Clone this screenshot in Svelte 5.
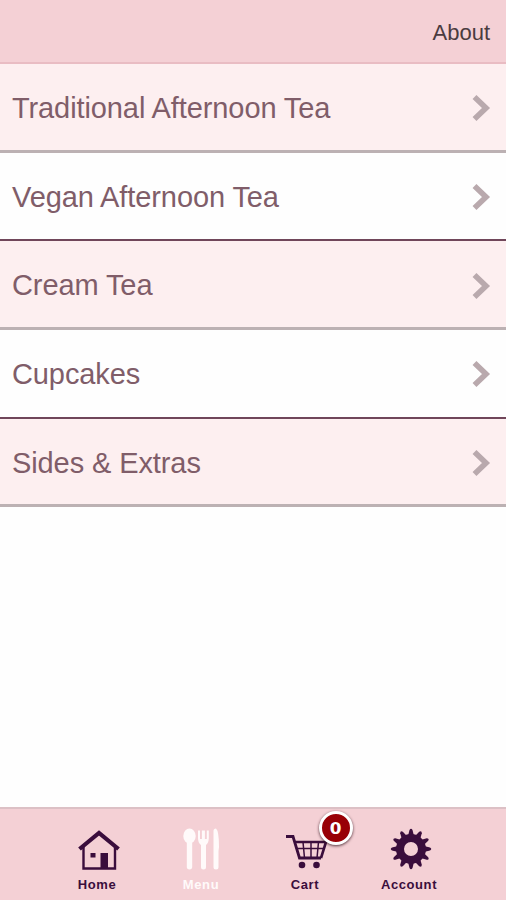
<script>
  const items = [
    'Traditional Afternoon Tea',
    'Vegan Afternoon Tea',
    'Cream Tea',
    'Cupcakes',
    'Sides & Extras',
  ];

  const tabs = [
    { id: 'home', label: 'Home' },
    { id: 'menu', label: 'Menu' },
    { id: 'cart', label: 'Cart' },
    { id: 'account', label: 'Account' },
  ];

  const teeth = Array.from({ length: 12 }, (_, i) => i * 30);

  let active = $state('menu');
  let cartCount = $state(0);
</script>

<div class="app">
  <header class="header">
    <button class="about">About</button>
  </header>

  <main class="list">
    {#each items as item}
      <button class="row">
        <span class="name">{item}</span>
        <svg class="chevron" width="20" height="28" viewBox="0 0 20 28">
          <path d="M3.5 3 15 14 3.5 25" />
        </svg>
      </button>
    {/each}
  </main>

  <nav class="tabbar">
    {#each tabs as tab}
      <button
        class="tab"
        class:active={active === tab.id}
        onclick={() => (active = tab.id)}
      >
        <span class="icon">
          <svg width="44" height="44" viewBox="0 0 44 44" fill="currentColor">
            {#if tab.id === 'home'}
              <path
                d="M3.5 21 23 5l19.5 16"
                fill="none"
                stroke="currentColor"
                stroke-width="4.2"
              />
              <path
                d="M7.5 19V40.500H39V19"
                fill="none"
                stroke="currentColor"
                stroke-width="2.4"
              />
              <rect x="14.5" y="25" width="5" height="4.5" />
              <rect x="24.5" y="25" width="7.5" height="15" />
            {:else if tab.id === 'menu'}
              <ellipse cx="9.5" cy="8" rx="6.2" ry="7.5" />
              <rect x="6.8" y="12" width="5.4" height="29.5" rx="2.7" />
              <path
                d="M18 2.5V10Q18 15 21 17V39a2.5 2.5 0 0 0 5 0V17Q28.800 15 28.800 10V2.500h-2V11h-1.900V2.500h-3V11h-1.900V2.500z"
              />
              <path
                d="M33.500 3Q33.500 .5 36 .5Q39 3 39 19L38.500 23V39a2.500 2.500 0 0 1-5 0z"
              />
            {:else if tab.id === 'cart'}
              <g fill="none" stroke="currentColor">
                <path d="M2 8.500h7L15.500 30H37" stroke-width="2.8" />
                <path d="M11 14h31L37 30" stroke-width="2.6" />
                <path
                  d="M13 20.500h27M19 14l1.500 16M27 14v16M34.500 14l-1.500 16"
                  stroke-width="1.5"
                />
              </g>
              <circle cx="18" cy="37" r="3.3" />
              <circle cx="32.5" cy="37" r="3.3" />
            {:else}
              <circle
                cx="23"
                cy="21"
                r="11"
                fill="none"
                stroke="currentColor"
                stroke-width="8"
              />
              {#each teeth as angle}
                <path
                  d="M20 8 21.500 2Q23-.500 24.500 2L26 8z"
                  transform="rotate({angle} 23 21)"
                />
              {/each}
            {/if}
          </svg>
          {#if tab.id === 'cart'}
            <span class="badge"><span class="count">{cartCount}</span></span>
          {/if}
        </span>
        <span class="label">{tab.label}</span>
      </button>
    {/each}
  </nav>
</div>

<style>
  :global(body) {
    margin: 0;
    background: #fefefe;
  }

  .app {
    display: flex;
    flex-direction: column;
    height: 100vh;
    overflow: hidden;
    font-family: 'Liberation Sans', Arial, sans-serif;
  }

  button {
    margin: 0;
    padding: 0;
    border: 0;
    background: none;
    font: inherit;
    cursor: pointer;
  }

  .header {
    box-sizing: border-box;
    display: flex;
    align-items: center;
    justify-content: flex-end;
    height: 64px;
    padding: 4px 16px 0 0;
    background: #f4d0d5;
    border-bottom: 2px solid #e9bcc3;
  }

  .about {
    color: #4a3b40;
    font-size: 22px;
  }

  .list {
    flex: 1;
  }

  .row {
    box-sizing: border-box;
    display: flex;
    align-items: center;
    justify-content: space-between;
    width: 100%;
    height: 88.7px;
    padding: 3px 15px 0 12px;
    background: #fdeff0;
    border-bottom: 3px solid #bcb1b3;
    text-align: left;
  }

  .row:nth-child(even) {
    padding-top: 2px;
    background: #fefefe;
    border-bottom: 2px solid #70465a;
  }

  .name {
    color: #805d69;
    font-size: 29px;
    letter-spacing: -0.1px;
    white-space: nowrap;
  }

  .chevron path {
    fill: none;
    stroke: #b9a9ad;
    stroke-width: 5.6;
  }

  .tabbar {
    box-sizing: border-box;
    display: flex;
    justify-content: center;
    height: 93px;
    padding-top: 19px;
    background: #f4d0d5;
    border-top: 2px solid #dcc0c5;
  }

  .tab {
    display: flex;
    flex-direction: column;
    align-items: center;
    width: 104px;
    color: #3a0d3c;
  }

  .tab.active {
    color: #fffafa;
  }

  .icon {
    position: relative;
    left: 1px;
    height: 44px;
  }

  .icon svg {
    display: block;
    overflow: visible;
  }

  .badge {
    position: absolute;
    top: -17px;
    left: 35px;
    box-sizing: border-box;
    width: 34px;
    height: 34px;
    border: 3px solid #fff;
    border-radius: 50%;
    background: #980006;
    box-shadow: 0 1px 3px rgba(40, 10, 20, 0.8);
    color: #fff;
    font: bold 16px/30px 'DejaVu Sans', sans-serif;
    text-align: center;
  }

  .count {
    display: inline-block;
    transform: scaleX(1.05);
  }

  .label {
    margin-top: 5px;
    font-size: 13px;
    font-weight: bold;
    line-height: 16px;
    letter-spacing: 0.6px;
  }
</style>
